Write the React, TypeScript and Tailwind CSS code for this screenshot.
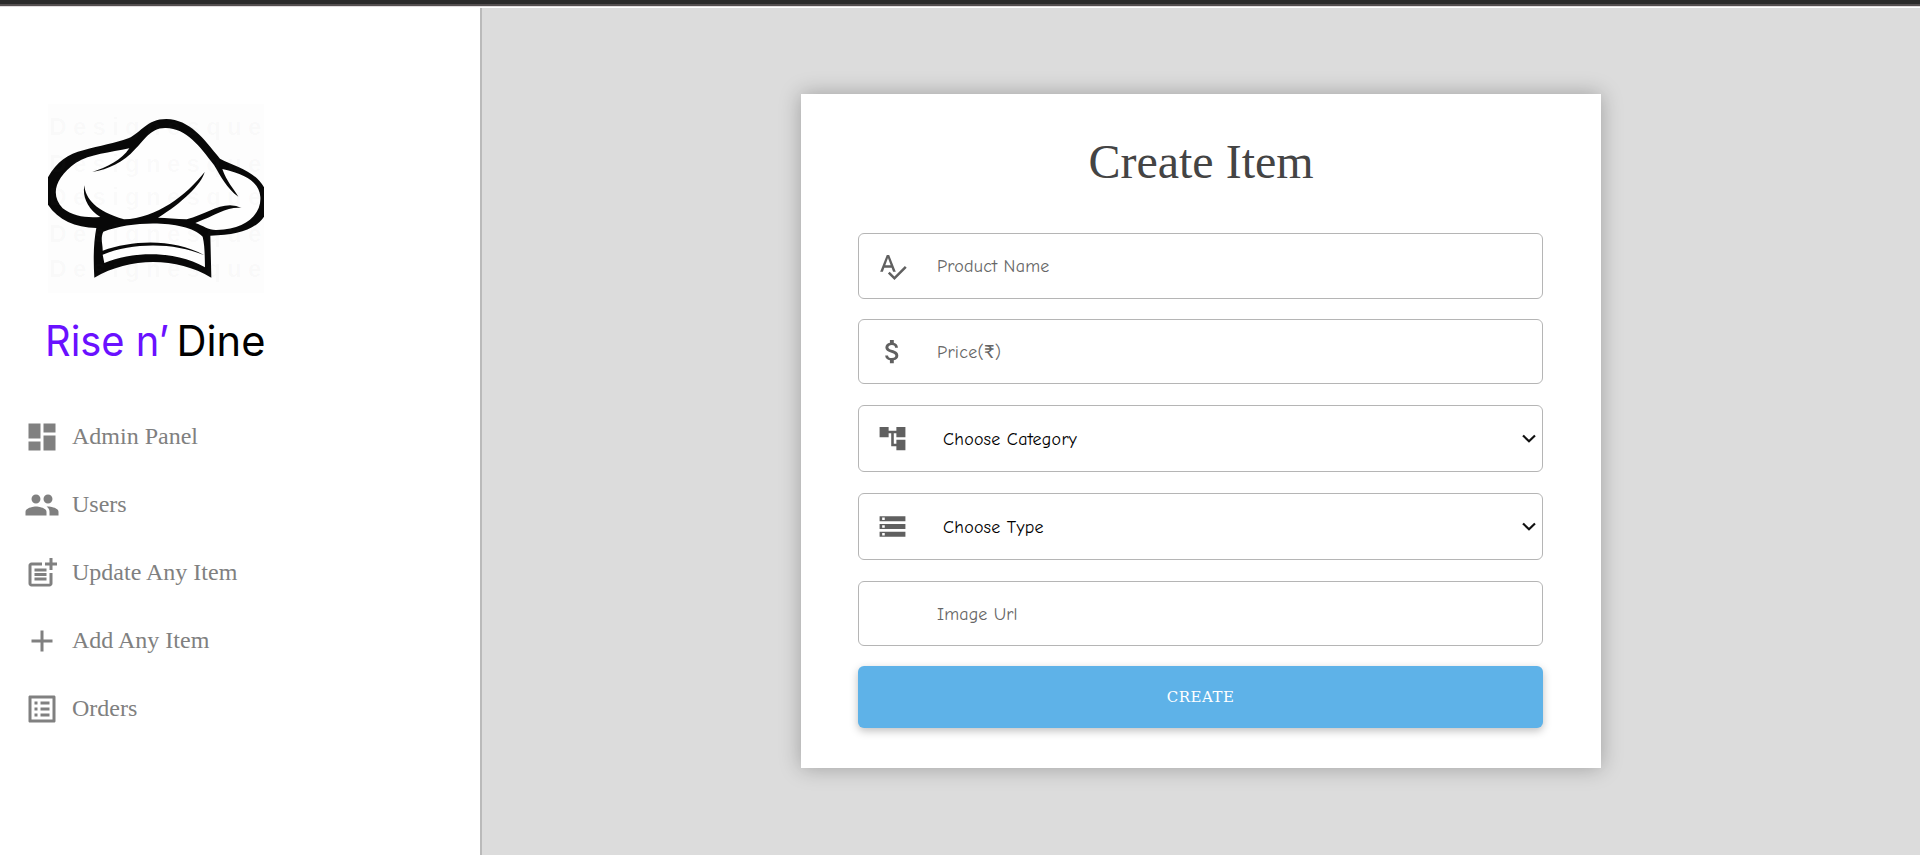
import React from "react";
import {
  MdDashboard,
  MdPeople,
  MdOutlinePostAdd,
  MdAdd,
  MdOutlineListAlt,
  MdSpellcheck,
  MdAttachMoney,
  MdAccountTree,
  MdStorage,
} from "react-icons/md";

const menu = [
  { label: "Admin Panel", Icon: MdDashboard },
  { label: "Users", Icon: MdPeople },
  { label: "Update Any Item", Icon: MdOutlinePostAdd },
  { label: "Add Any Item", Icon: MdAdd },
  { label: "Orders", Icon: MdOutlineListAlt },
];

function ChefHat() {
  return (
    <svg viewBox="144 72 648 567" className="block h-[189px] w-[216px]">
      <rect x="144" y="72" width="648" height="567" fill="#fdfdfd" />
      <path
        fill="#080808"
        d="M144 292 C170 245 205 222 250 211 C300 197 345 190 385 175 C425 157 440 117 499 117 C570 119 610 175 660 236 C705 260 765 272 792 322 L792 410 C765 450 710 466 631 467 L634 593 C530 530 390 530 283 593 C280 540 280 490 289 444 C225 442 175 420 144 374 Z"
      />
      <path
        fill="#fefefe"
        d="M388 205 C330 218 270 222 228 248 C165 292 150 345 188 385 C220 410 260 414 301 411 C262 385 247 350 253 316 C256 356 288 394 372 418 C470 415 560 345 614 276 C605 312 545 370 474 413 C500 413 530 417 560 418 C610 405 650 376 690 376 Q710 376 725 384 C680 380 650 405 586 429 C610 437 625 451 650 450 C740 449 785 400 781 350 C777 310 745 285 667 267 C680 305 700 325 715 350 C680 325 663 290 642 255 C600 200 560 145 497 144 C450 143 430 185 405 208 C370 248 325 268 277 276 C320 262 365 240 388 205 Z
        M310 455 C300 475 309 495 308 512 C400 480 520 475 613 526 C520 487 400 488 308 524 L313 549 C400 512 530 512 615 562 C614 530 615 500 608 470 C560 420 400 420 310 455 Z"
      />
      <g
        fontFamily="Liberation Sans, sans-serif"
        fontWeight="bold"
        fontSize="72"
        fill="#808080"
        fillOpacity="0.04"
      >
        {[165, 275, 375, 485, 590].map((y) => (
          <text key={y} x="148" y={y} textLength="636">
            Designesque
          </text>
        ))}
      </g>
    </svg>
  );
}

function Sidebar() {
  return (
    <aside className="flex w-[480px] shrink-0 flex-col bg-white pl-6 pt-24">
      <div className="ml-6 flex w-[216px] flex-col">
        <ChefHat />
        <svg viewBox="0 0 216 60" className="mt-4 block h-[60px] w-[216px] overflow-visible">
          <g fontFamily="Inter, sans-serif" fontWeight="400" fontSize="42">
            <text x="-3" y="46.5" textLength="124" lengthAdjust="spacingAndGlyphs" fill="#6a11ff">
              Rise n’
            </text>
            <text x="128.5" y="46.5" textLength="89" lengthAdjust="spacingAndGlyphs" fill="#000">
              Dine
            </text>
          </g>
        </svg>
      </div>
      <nav className="mt-[33px] flex flex-col">
        {menu.map(({ label, Icon }) => (
          <a key={label} className="flex h-[68px] items-center text-[#808080]">
            <Icon className="mt-px size-9" />
            <span className="ml-3 font-['Liberation_Serif',serif] text-[24px] leading-7">
              {label}
            </span>
          </a>
        ))}
      </nav>
    </aside>
  );
}

const hand =
  "pt-px font-medium font-['Comic_Sans_MS','Comic_Neue',Lato,'Noto_Sans',sans-serif]";

function Chevron() {
  return (
    <svg viewBox="0 0 14 9" className="mr-[6px] h-[9px] w-[14px]">
      <path d="M1 1.5 L7 7.2 L13 1.5" fill="none" stroke="#111" strokeWidth="2.2" />
    </svg>
  );
}

export default function App() {
  const field =
    "flex w-full items-center rounded-[6px] border border-[#b5b5b5] bg-white";
  return (
    <div className="flex h-[857px] w-[1920px] flex-col overflow-hidden bg-white">
      <div className="h-1 shrink-0 bg-[#2b2b2b]" />
      <div className="h-0.5 shrink-0 bg-[#544f50]" />
      <div className="h-px shrink-0 bg-[#e0dcdd]" />
      <div className="mt-px flex h-[847px]">
        <Sidebar />
        <main className="flex flex-1 items-start justify-center border-l-2 border-[#bababa] bg-[#dcdcdc] pt-[86px]">
          <form className="flex h-[674px] w-[800px] flex-col bg-white pl-[57px] pr-[58px] shadow-[0_0_20px_rgba(0,0,0,0.28)]">
            <h1 className="mt-[38px] pl-px text-center font-['Liberation_Serif',serif] text-[48px] leading-[60px] text-[#444]">
              Create Item
            </h1>
            <div className={`${field} mt-[41px] h-[66px]`}>
              <MdSpellcheck className="ml-[18px] size-[31px] text-[#606060]" />
              <span className={`${hand} ml-[29px] text-[18px] tracking-[0.2px] text-[#666]`}>
                Product Name
              </span>
            </div>
            <div className={`${field} mt-5 h-[65px]`}>
              <MdAttachMoney className="ml-[18px] size-[31px] text-[#606060]" />
              <span className={`${hand} ml-[29px] text-[18px] tracking-[0.3px] text-[#666]`}>
                Price(₹)
              </span>
            </div>
            <div className={`${field} mt-[21px] h-[67px]`}>
              <MdAccountTree className="ml-[18px] size-[31px] text-[#606060]" />
              <span className={`${hand} ml-[35px] flex-1 text-[18px] tracking-[0.25px] text-black`}>
                Choose Category
              </span>
              <Chevron />
            </div>
            <div className={`${field} mt-[21px] h-[67px]`}>
              <MdStorage className="ml-[18px] size-[31px] text-[#606060]" />
              <span className={`${hand} ml-[35px] flex-1 text-[18px] tracking-[0.25px] text-black`}>
                Choose Type
              </span>
              <Chevron />
            </div>
            <div className={`${field} mt-[21px] h-[65px]`}>
              <span className={`${hand} ml-[78px] text-[18px] tracking-[0.15px] text-[#666]`}>
                Image Url
              </span>
            </div>
            <button
              type="button"
              className="mt-5 h-[62px] w-full rounded-[6px] bg-[#5eb2e8] font-['DejaVu_Serif',serif] text-[15px] tracking-[0.5px] text-white shadow-[0_3px_8px_rgba(0,0,0,0.25)]"
            >
              CREATE
            </button>
          </form>
        </main>
      </div>
    </div>
  );
}
